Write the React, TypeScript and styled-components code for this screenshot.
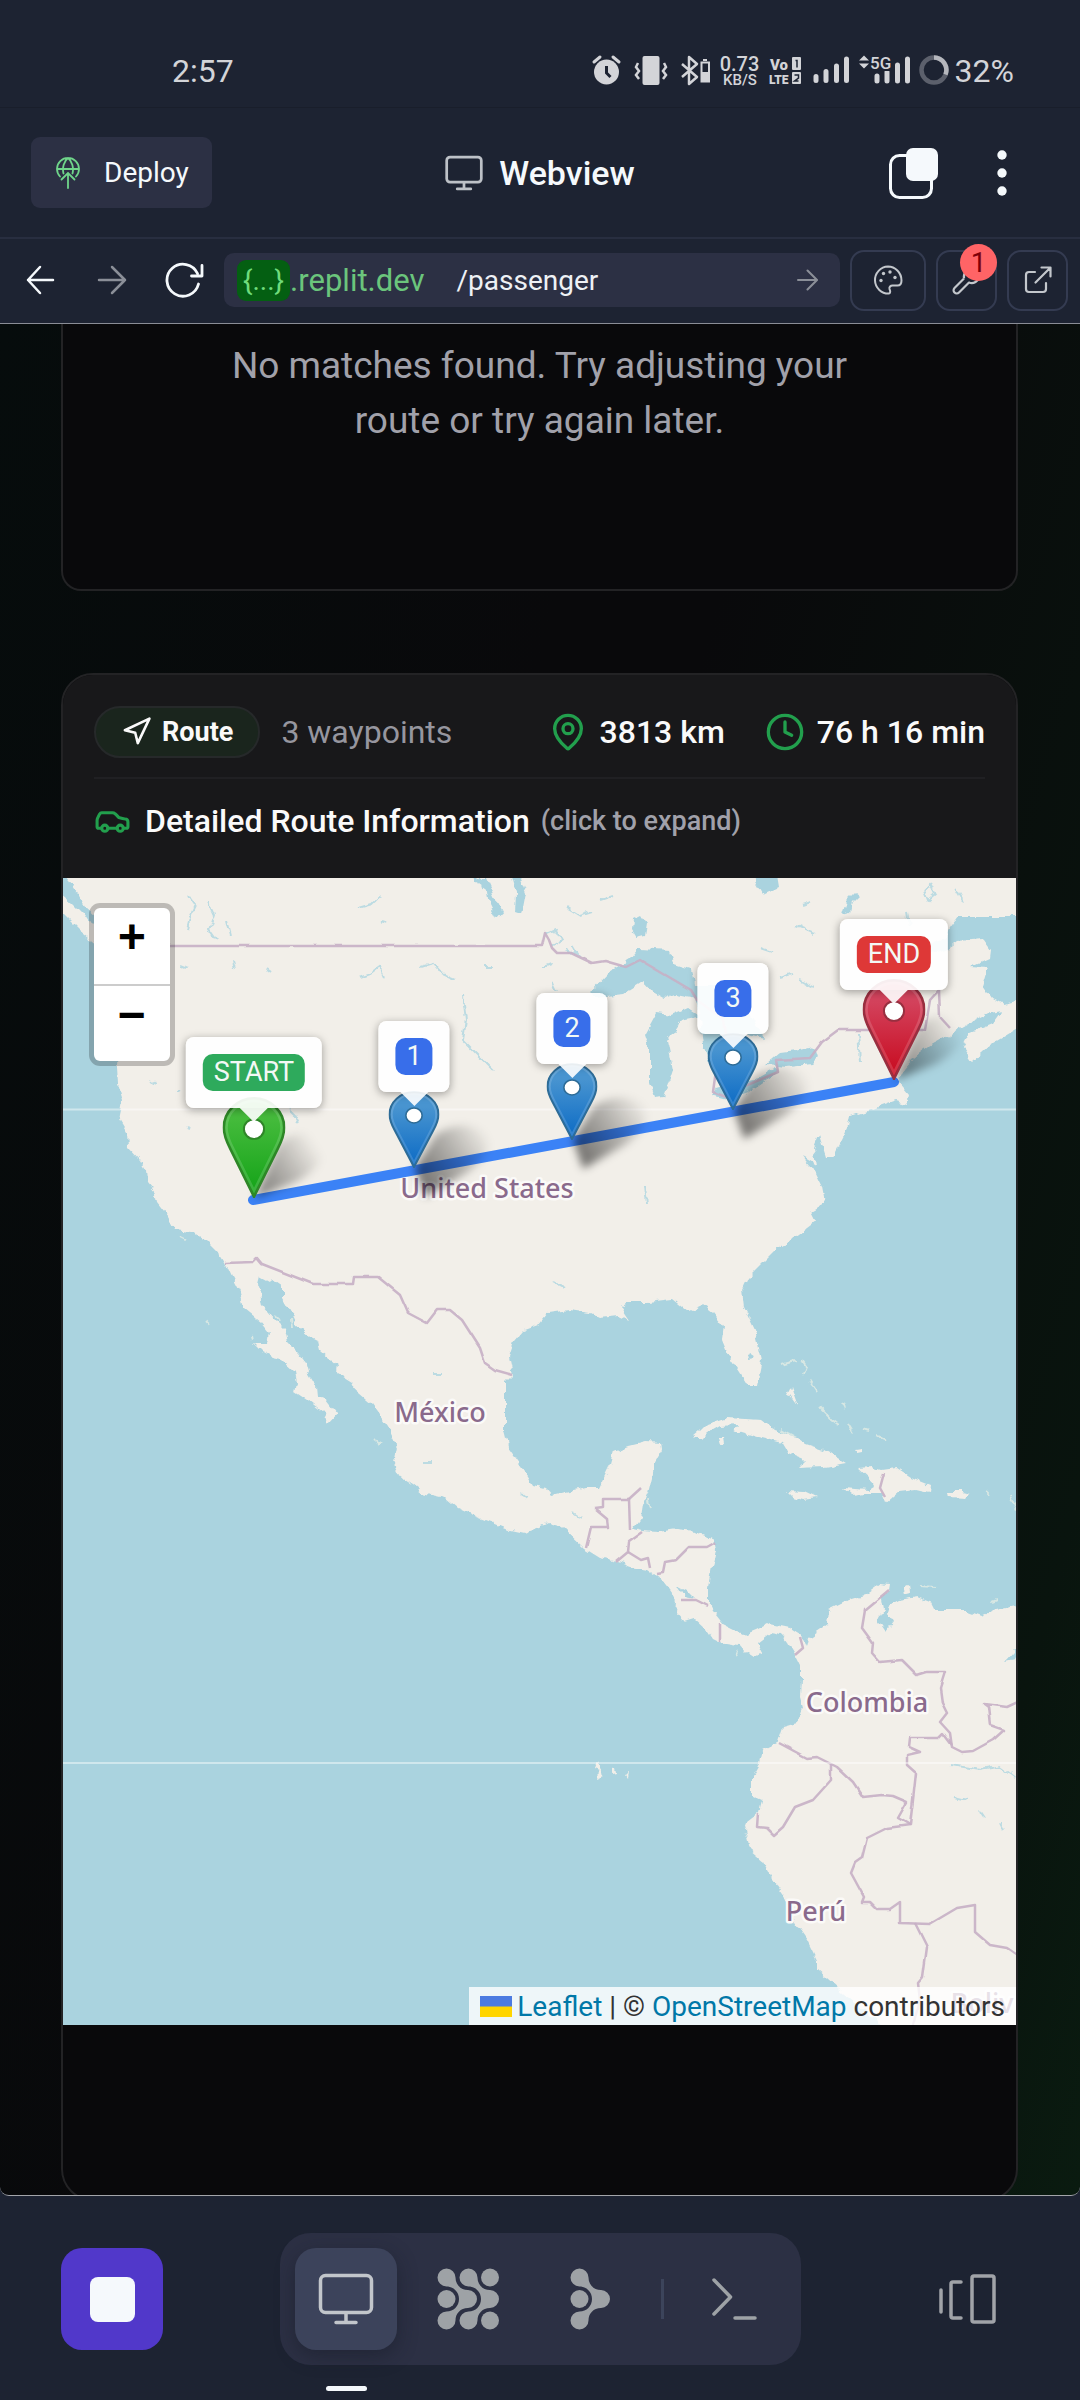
import React from "react";
import styled, { createGlobalStyle, css } from "styled-components";
import { Car, Clock, MapPin, Navigation } from "lucide-react";

const ui = `Roboto, "Liberation Sans", sans-serif`;
const ink = "#1d2332";
const raised = "#2c3044";

const GlobalStyle = createGlobalStyle`
  *, *::before, *::after { box-sizing: border-box; }
  body { margin: 0; background: ${ink}; font-family: ${ui}; }
  button { border: 0; padding: 0; background: none; color: inherit; font: inherit; cursor: pointer; }
  svg { display: block; flex: none; }
`;

const Screen = styled.div`
  display: flex;
  flex-direction: column;
  height: 100vh;
  background: ${ink};
  color: #f5f9fc;
`;

/* ---------- status bar ---------- */

const StatusBar = styled.div`
  display: flex;
  align-items: center;
  justify-content: space-between;
  height: 108px;
  padding: 34px 66px 0 172px;
  border-bottom: 1px solid #191e2b;
  color: #d3d4d8;
  font-size: 32px;
  line-height: 36px;
`;

const StatusIcons = styled.div`
  display: flex;
  align-items: center;
  gap: 6px;
`;

/* ---------- title bar ---------- */

const TitleBar = styled.header`
  display: grid;
  grid-template-columns: 1fr auto 1fr;
  align-items: center;
  height: 131px;
  padding: 0 31px;
  border-bottom: 2px solid #282e40;
`;

const DeployButton = styled.button`
  display: flex;
  align-items: center;
  justify-self: start;
  gap: 24px;
  height: 71px;
  padding: 0 23px 0 25px;
  border-radius: 9px;
  background: ${raised};
  font-size: 28px;
`;

const Title = styled.h1`
  display: flex;
  align-items: center;
  gap: 16px;
  margin: 0;
  font-size: 34px;
  font-weight: 500;

  svg { color: #bdc1c7; }
`;

const TitleActions = styled.div`
  display: flex;
  align-items: center;
  justify-self: end;
  gap: 58px;
  margin-right: 42px;
`;

/* ---------- browser toolbar ---------- */

const Toolbar = styled.div`
  display: flex;
  align-items: center;
  gap: 10px;
  height: 85px;
  padding: 0 12px 2px 20px;
  border-bottom: 1px solid #8a8d96;
`;

const NavButtons = styled.div`
  display: flex;
  align-items: center;
  gap: 32px;
  margin-right: 8px;
`;

const NavButton = styled.button<{ $dim?: boolean }>`
  color: ${(p) => (p.$dim ? "#8b8f98" : "#f5f9fc")};
`;

const AddressBar = styled.form`
  display: flex;
  flex: 1;
  align-items: center;
  min-width: 0;
  height: 54px;
  padding: 0 22px 0 13px;
  border-radius: 10px;
  background: ${raised};
  font-size: 28px;
  line-height: 41px;
`;

const HostChip = styled.span`
  padding: 0 6px;
  border-radius: 9px;
  background: #045f12;
  color: #6fdc7c;
`;

const Host = styled.span`
  color: #6bc57c;
  font-size: 31px;
`;

const PathInput = styled.input`
  flex: 1;
  min-width: 0;
  margin-left: 32px;
  padding: 0;
  border: 0;
  outline: 0;
  background: none;
  color: #eef1f5;
  font: inherit;
`;

const ToolButton = styled.button<{ $wide?: boolean }>`
  position: relative;
  display: grid;
  place-items: center;
  width: ${(p) => (p.$wide ? 76 : 61)}px;
  height: 61px;
  border: 2px solid #343b51;
  border-radius: 14px;
  color: #c3c7cc;
`;

const Badge = styled.span`
  position: absolute;
  top: -8px;
  right: -2px;
  width: 37px;
  height: 37px;
  border-radius: 50%;
  background: #ff6466;
  color: #7d0009;
  font-size: 28px;
  line-height: 37px;
`;

/* ---------- page inside the web view ---------- */

const Page = styled.main`
  display: flex;
  flex: 1;
  flex-direction: column;
  gap: 82px;
  min-height: 0;
  overflow: hidden;
  padding: 0 62px 0 61px;
  border-bottom: 1px solid #a3a5aa;
  border-radius: 0 0 9px 9px;
  background: linear-gradient(105deg, #060c0c 0%, #09090b 40%, #09090b 50%, #09140e 88%, #0a1b10 100%);
`;

const panel = css`
  border: 2px solid #232325;
  background: #09090b;
  flex: none;
`;

const EmptyCard = styled.section`
  ${panel}
  border-top: 0;
  border-radius: 0 0 20px 20px;
  padding: 14px 150px 141px;
`;

const EmptyText = styled.p`
  margin: 0;
  color: #a1a1aa;
  font-size: 37px;
  line-height: 55px;
  text-align: center;
`;

const RouteCard = styled.section`
  ${panel}
  overflow: hidden;
  padding-bottom: 174px;
  border-radius: 32px;
`;

const RouteHeader = styled.div`
  padding: 0 31px;
  background: #18181a;
`;

const SummaryRow = styled.div`
  display: flex;
  align-items: center;
  justify-content: space-between;
  height: 104px;
  padding-top: 11px;
  border-bottom: 2px solid #202023;
`;

const Cluster = styled.div<{ $gap: number }>`
  display: flex;
  align-items: center;
  gap: ${(p) => p.$gap}px;
`;

const RouteBadge = styled.span`
  display: flex;
  align-items: center;
  gap: 10px;
  height: 52px;
  padding: 0 25px;
  border: 2px solid #26292a;
  border-radius: 26px;
  background: #1a251d;
  color: #fafafa;
  font-size: 27px;
  font-weight: 700;
`;

const Muted = styled.span`
  color: #96969f;
  font-size: 32px;
`;

const Stat = styled.span`
  display: flex;
  align-items: center;
  gap: 12px;
  color: #fafafa;
  font-size: 32px;
  font-weight: 500;

  svg { color: #229f4d; }
`;

const DetailsToggle = styled.button`
  display: flex;
  align-items: center;
  width: 100%;
  height: 99px;
  padding-bottom: 16px;
  color: #fafafa;
  font-size: 32px;
  font-weight: 500;

  svg { margin-right: 14px; color: #229f4d; }
  small { margin-left: 11px; color: #a1a1aa; font-size: 27px; }
`;

/* ---------- map ---------- */

const MapFrame = styled.div`
  position: relative;
  aspect-ratio: 953 / 1147;
  overflow: hidden;
  background: #aad3df;
`;

const Chart = styled.svg`
  width: 100%;
  height: 100%;
`;

const PlaceName = styled.text`
  fill: #8a6a8c;
  stroke: #fbfaf8;
  stroke-width: 5px;
  stroke-linejoin: round;
  paint-order: stroke;
  font: 500 27px "Noto Sans", sans-serif;
`;

const ZoomControl = styled.div`
  position: absolute;
  top: 25px;
  left: 26px;
  display: flex;
  flex-direction: column;
  border: 5px solid rgba(0, 0, 0, 0.22);
  border-radius: 11px;
  background: #fff;
  background-clip: padding-box;
`;

const ZoomButton = styled.button`
  width: 76px;
  height: 76px;
  padding-bottom: 12px;
  color: #000;
  font: 700 48px/60px "Liberation Mono", monospace;

  & + & { border-top: 2px solid #ccc; height: 77px; }
`;

const Pin = styled.div`
  position: absolute;
  width: 0;
  height: 0;
`;

const PinArt = styled.svg`
  position: absolute;
  bottom: 0;
  transform: translateX(-50%);
`;

const PinShadow = styled.svg`
  position: absolute;
  left: -20px;
  top: -90px;
`;

const Tooltip = styled.div<{ $lift: number }>`
  position: absolute;
  bottom: ${(p) => p.$lift}px;
  transform: translateX(-50%);
  padding: 17px;
  border-radius: 8px;
  background: rgba(255, 255, 255, 0.92);
  box-shadow: 0 2px 8px rgba(0, 0, 0, 0.35);

  &::after {
    content: "";
    position: absolute;
    top: 100%;
    left: 50%;
    margin-left: -14px;
    border: 14px solid transparent;
    border-top-color: rgba(255, 255, 255, 0.9);
    border-bottom: 0;
  }
`;

const Tag = styled.span<{ $color: string }>`
  display: block;
  padding: 0 11px;
  border-radius: 10px;
  background: ${(p) => p.$color};
  color: #f3f8f5;
  font-size: 27px;
  line-height: 37px;
`;

const Attribution = styled.div`
  position: absolute;
  right: 0;
  bottom: 0;
  display: flex;
  align-items: center;
  gap: 5px;
  height: 38px;
  padding: 0 11px;
  background: rgba(255, 255, 255, 0.8);
  color: #333;
  font-size: 28px;
  white-space: nowrap;

  a { color: #0078a8; text-decoration: none; }
`;

const WEST = 63;
const NORTH = 878;
const WIDTH = 953;
const HEIGHT = 1147;

const mainland = `60,870 72,885 86,908 95,916 99,924 92,926 84,914 72,902 60,892 60,910 68,918 80,930 90,938
97,950 108,985 119,1020 117,1067 118,1083 123,1100 119,1120 127,1133 128,1147 140,1160 146,1170 147,1183
155,1193 157,1203 168,1217 175,1230 190,1232 207,1240 217,1250 225,1263 232,1278 240,1293 245,1310 260,1322
269,1333 267,1343 253,1343 262,1352 273,1358 282,1360 295,1372 297,1382 295,1392 307,1400 323,1413 328,1423
337,1413 327,1400 318,1397 317,1387 308,1372 305,1362 298,1353 288,1343 285,1330 275,1320 262,1305 260,1293
257,1285 259,1277 268,1282 273,1280 283,1287 283,1298 290,1310 298,1327 310,1338 318,1342 320,1350 328,1357
338,1365 337,1373 353,1383 358,1393 372,1405 388,1427 397,1447 395,1457 392,1462 398,1475 413,1485 423,1493
445,1498 457,1508 477,1517 493,1523 510,1530 524,1533 540,1527 548,1523 562,1527 584,1548 600,1558 617,1562
631,1567 648,1570 662,1580 670,1590 677,1600 676,1612 684,1621 694,1618 706,1629 712,1638 720,1642 738,1645
745,1653 753,1658 762,1653 757,1643 770,1633 782,1635 788,1643 795,1655 801,1667 801,1680 800,1697 803,1708
797,1723 783,1727 778,1742 763,1750 760,1763 752,1777 752,1795 763,1800 760,1812 747,1822 744,1830 749,1850
763,1862 773,1880 785,1897 795,1923 807,1940 817,1960 817,1970 837,1988 860,2007 888,2030 1020,2030 1020,1606
1010,1607 996,1610 982,1616 965,1610 934,1610 930,1602 917,1597 899,1600 889,1605 887,1612 893,1623 886,1632
878,1620 883,1610 881,1599 889,1590 890,1584 882,1583 865,1595 848,1600 843,1603 829,1610 827,1625 808,1638
806,1647 800,1634 789,1627 770,1623 756,1630 744,1635 724,1625 712,1610 708,1603 708,1587 712,1567 716,1550
714,1540 703,1535 696,1531 677,1529 658,1532 641,1531 633,1529 641,1518 643,1505 648,1493 652,1477 655,1463
663,1450 662,1443 645,1442 629,1446 614,1452 610,1467 600,1488 586,1488 552,1496 545,1488 533,1485 524,1470
510,1450 505,1430 505,1383 513,1375 509,1357 514,1342 524,1330 538,1325 548,1313 569,1310 590,1313 600,1318
618,1316 629,1321 621,1309 629,1302 648,1302 672,1299 688,1312 703,1305 713,1313 724,1327 722,1340 729,1357
739,1372 747,1385 757,1385 762,1360 755,1330 744,1307 742,1290 748,1277 775,1250 795,1237 815,1222 810,1212
825,1203 822,1187 815,1173 803,1157 817,1165 814,1147 819,1135 826,1157 833,1157 848,1127 850,1117 871,1110
896,1101 906,1104 908,1095 898,1083 905,1068 912,1060 929,1047 950,1035 964,1027 991,1012 1002,1010 992,1024
970,1033 963,1047 972,1061 990,1045 1020,1027 1020,870`;

const waters = [
  "590,993 609,973 630,960 640,948 669,950 674,965 691,970 697,998 676,994 664,999 652,992 643,982 623,995 595,998",
  "657,1013 672,1015 688,1008 700,1016 681,1020 667,1040 673,1070 664,1097 655,1098 650,1083 650,1050 645,1035",
  "693,985 715,985 745,1005 764,1038 748,1034 730,1045 722,1050 712,1070 703,1046 699,1010",
  "712,1095 728,1099 750,1091 778,1072 774,1069 755,1080 730,1083 716,1087",
  "766,1065 781,1052 797,1050 812,1046 819,1057 812,1064 788,1067",
  "750,870 764,895 779,888 776,870",
  "633,919 641,915 647,924 645,936 637,938 632,930",
  "470,870 477,884 488,892 490,905 497,919 503,912 495,896 488,880 482,880",
  "510,870 514,885 517,895 516,912 522,914 526,893 520,878",
  "1020,917 958,917 950,928 946,938 929,943 908,963 920,957 946,950 957,942 984,940 991,950 990,958 970,967 988,968 983,985 992,998 1004,1004 1020,1000",
  "677,1586 685,1590 694,1599 684,1597",
  "748,1355 752,1353 754,1359 749,1360",
  "1005,1662 1014,1652 1012,1649 1018,1652 1014,1660",
  "850,913 852,903 860,895 856,892 846,902 842,915",
];

const islands = [
  "693,1438 700,1432 707,1425 727,1418 745,1419 762,1420 775,1430 796,1437 806,1444 824,1450 846,1463 824,1467 797,1468 805,1460 788,1453 782,1443 770,1440 758,1437 734,1430 738,1425 720,1426 708,1433 703,1438",
  "718,1437 724,1437 725,1443 720,1444",
  "787,1491 803,1492 816,1498 803,1500 793,1497",
  "858,1468 872,1467 882,1470 896,1468 910,1477 930,1485 929,1493 916,1490 899,1492 886,1503 882,1493 865,1493 851,1495 843,1488 856,1489 868,1490 873,1487 868,1477",
  "948,1491 962,1491 970,1493 966,1498 949,1497",
  "791,1387 794,1396 798,1407 790,1396 787,1395",
  "988,924 1002,929 1020,936 1020,941 1003,937 990,930",
  "597,1761 600,1768 605,1776 598,1779 599,1771 594,1769",
  "905,1588 909,1586 910,1592 906,1593",
  "855,1450 862,1449 862,1452 857,1453",
  "611,1770 614,1769 615,1773 611,1774",
  "625,1774 628,1773 627,1777",
];

const borders = [
  "95,946 542,946 545,933 549,940 552,948 557,953 571,953 592,963 605,961 626,967 640,960 691,990 697,1000 724,1020 727,1040 716,1070 713,1092 726,1097 745,1086 778,1072 776,1060 810,1058 822,1042 838,1030 925,1030 930,1000 939,990 940,1017 950,1028",
  "225,1263 253,1262 257,1258 262,1264 313,1284 353,1284 354,1277 378,1277 400,1295 408,1313 427,1323 437,1310 450,1310 462,1320 480,1348 485,1363 495,1370 513,1375",
  "586,1548 591,1527 608,1527 607,1519 595,1509 603,1508 603,1499 629,1499 630,1530",
  "629,1499 641,1488",
  "616,1562 628,1552 629,1542 643,1532",
  "628,1552 641,1560 648,1558 650,1568",
  "657,1573 663,1572 665,1562 676,1560 689,1547 707,1547 716,1542",
  "681,1600 696,1600 708,1606",
  "720,1642 720,1624",
  "800,1637 803,1648 795,1655",
  "889,1590 877,1600 865,1610 862,1628 873,1643 872,1653 880,1662 902,1660 917,1675 927,1672 945,1672 940,1688 942,1703 947,1713 940,1722 950,1733 952,1747 962,1752 973,1751 993,1740 1004,1730 990,1725 988,1707 984,1704 1007,1707 1020,1701",
  "952,1745 943,1733 938,1738 910,1738 909,1747 920,1752 907,1755 907,1765 916,1773 913,1800 910,1825 898,1818 907,1802 893,1796 882,1795 863,1797 853,1782 837,1767 817,1757 807,1758 779,1743",
  "831,1763 831,1780 813,1800 795,1807 783,1827 774,1835 767,1828 757,1827 758,1813",
  "910,1825 887,1828 867,1838 862,1858 855,1863 851,1873 864,1897 862,1902 870,1902 877,1909 890,1909 900,1902 900,1923 930,1924 957,1908 975,1905 975,1932 990,1945 1007,1948 1020,1957",
  "915,1923 927,1947 923,1977 918,1983 920,2000 913,2025",
  "884,1473 880,1488 885,1497",
];

const streams = [
  "188,894 196,905 190,918 187,930", "208,902 214,915 209,930 216,940", "226,920 230,935",
  "358,978 372,973 380,967 384,976", "422,966 432,963 440,972 454,978", "463,996 466,1020 463,1040 475,1052 493,1070",
  "358,908 372,904 380,896", "545,935 556,930 562,940 552,946", "565,950 578,956 572,946",
  "542,968 552,964", "567,908 580,916 592,912", "600,900 612,896", "780,978 792,974", "800,980 815,988",
  "760,948 772,952", "797,925 815,933", "803,905 812,902", "858,1035 860,1060", "645,1185 647,1205",
  "181,965 188,968", "265,968 270,972", "234,961 236,968", "150,1080 156,1084", "176,1092 180,1090",
  "187,1127 191,1129", "289,1108 295,1114 300,1124", "382,920 388,922", "484,966 492,966",
  "924,890 930,884 935,894 928,900 924,890", "907,912 909,926", "955,888 963,902",
  "432,1374 443,1374", "423,1463 434,1463", "522,1494 527,1498", "573,1512 582,1518",
  "950,1765 980,1770 1000,1766 1016,1778", "955,1797 968,1800", "980,1812 984,1818", "1000,1822 1004,1830",
  "553,1282 564,1288", "552,983 556,992",
];

const shoals = [
  "781,1364 795,1360", "802,1360 806,1366 803,1374", "810,1381 817,1392", "820,1408 830,1418 838,1424",
  "842,1402 845,1408", "847,1422 853,1432", "862,1429 868,1431", "878,1437 886,1441", "781,1429 794,1436",
  "648,1500 650,1508", "984,1490 988,1494", "920,1585 935,1586", "992,1602 997,1600", "375,1440 380,1444",
  "205,1320 209,1324", "251,1335 252,1340", "276,1315 280,1322", "292,1318 293,1328", "1010,1495 1016,1510",
  "735,1651 738,1656", "180,1237 186,1240",
];

const places = [
  { name: "United States", x: 487, y: 1198 },
  { name: "México", x: 440, y: 1422 },
  { name: "Colombia", x: 867, y: 1712 },
  { name: "Perú", x: 816, y: 1921 },
  { name: "Boliv", x: 982, y: 2013 },
];

type Stop = { label: string; x: number; y: number; kind: "start" | "way" | "end" };

const stops: Stop[] = [
  { label: "START", x: 254, y: 1198, kind: "start" },
  { label: "1", x: 414, y: 1168, kind: "way" },
  { label: "2", x: 572, y: 1140, kind: "way" },
  { label: "3", x: 733, y: 1110, kind: "way" },
  { label: "END", x: 894, y: 1080, kind: "end" },
];

const kinds = {
  start: { tag: "#2eaa5c", top: "#45bb3c", bottom: "#18a51b", edge: "#2f8628", w: 63, h: 101 },
  way: { tag: "#386eea", top: "#4894d0", bottom: "#126fc6", edge: "#2e6c97", w: 51, h: 77 },
  end: { tag: "#de3837", top: "#d3435d", bottom: "#c90f24", edge: "#982f40", w: 63, h: 101 },
};

const percent = (part: number, whole: number) => `${(part / whole) * 100}%`;

function StopPin({ stop }: { stop: Stop }) {
  const k = kinds[stop.kind];
  const way = stop.kind === "way";
  const id = `pin-${stop.label}`;
  return (
    <Pin style={{ left: percent(stop.x - WEST, WIDTH), top: percent(stop.y - NORTH, HEIGHT) }}>
      <PinShadow width="140" height="140" viewBox="-20 -90 140 140" aria-hidden="true">
        <defs>
          <linearGradient id={`${id}-s`} gradientUnits="userSpaceOnUse" x1="5" y1="5" x2="72" y2="-38">
            <stop offset="0" stopColor="#000" stopOpacity=".5" />
            <stop offset=".5" stopColor="#000" stopOpacity=".26" />
            <stop offset="1" stopColor="#000" stopOpacity="0" />
          </linearGradient>
          <filter id={`${id}-b`} x="-30%" y="-30%" width="160%" height="160%">
            <feGaussianBlur stdDeviation="4" />
          </filter>
        </defs>
        <path
          d={way ? "M1 0 L11 29 L54 4 Q84 -18 70 -36 Q48 -50 22 -34Z" : "M1 0 L42 -16 Q78 -36 66 -56 Q46 -74 24 -54Z"}
          fill={`url(#${id}-s)`}
          filter={`url(#${id}-b)`}
        />
      </PinShadow>
      <PinArt width={k.w} height={k.h} viewBox="0 0 25 41" preserveAspectRatio="none" aria-hidden="true">
        <defs>
          <linearGradient id={id} x1="0" y1="0" x2="0" y2="1">
            <stop offset=".2" stopColor={k.top} />
            <stop offset=".9" stopColor={k.bottom} />
          </linearGradient>
        </defs>
        <path
          d="M12.5.5C5.9.5.5 5.9.5 12.5c0 3 1.2 5.8 2.6 8.6L12.5 40.5l9.4-19.400c1.400-2.800 2.600-5.600 2.600-8.600C24.500 5.900 19.100.5 12.500.5z"
          fill={`url(#${id})`}
          stroke={k.edge}
        />
        <path
          d="M12.5 1.600C6.500 1.600 1.600 6.500 1.600 12.500c0 2.800 1.100 5.400 2.500 8.100L12.500 38l8.400-17.400c1.400-2.700 2.500-5.300 2.500-8.100C23.400 6.500 18.500 1.600 12.500 1.600z"
          fill="none"
          stroke="#fff"
          strokeOpacity=".15"
        />
        <circle cx="12.5" cy="13" r="4" fill="#fff" stroke={k.edge} strokeWidth=".8" />
      </PinArt>
      <Tooltip $lift={way ? 76 : 90} role="tooltip">
        <Tag $color={k.tag}>{stop.label}</Tag>
      </Tooltip>
    </Pin>
  );
}

function RouteMap() {
  return (
    <MapFrame>
      <Chart viewBox={`${WEST} ${NORTH} ${WIDTH} ${HEIGHT}`} preserveAspectRatio="none" role="img" aria-label="Map of the route">
        <defs>
          <filter id="coast" filterUnits="userSpaceOnUse" x={WEST - 10} y={NORTH - 10} width={WIDTH + 20} height={HEIGHT + 20}>
            <feTurbulence type="fractalNoise" baseFrequency=".11" numOctaves="2" seed="4" />
            <feDisplacementMap in="SourceGraphic" scale="8" xChannelSelector="R" yChannelSelector="G" />
          </filter>
          <filter id="frontier" filterUnits="userSpaceOnUse" x={WEST - 10} y={NORTH - 10} width={WIDTH + 20} height={HEIGHT + 20}>
            <feTurbulence type="fractalNoise" baseFrequency=".06" numOctaves="1" seed="2" />
            <feDisplacementMap in="SourceGraphic" scale="3" xChannelSelector="R" yChannelSelector="G" />
          </filter>
        </defs>
        <rect x={WEST} y={NORTH} width={WIDTH} height={HEIGHT} fill="#aad3df" />
        <g filter="url(#coast)">
          <g fill="#f2efe9">
            <polygon points={mainland} />
            {islands.map((p) => <polygon key={p} points={p} />)}
          </g>
          <g fill="#aad3df">{waters.map((p) => <polygon key={p} points={p} />)}</g>
          <g fill="none" stroke="#d7e7e3" strokeWidth="2">{shoals.map((p) => <polyline key={p} points={p} />)}</g>
          <g fill="none" stroke="#bcdbe2" strokeWidth="2">{streams.map((p) => <polyline key={p} points={p} />)}</g>
        </g>
        <g fill="none" stroke="#c6b0c5" strokeWidth="2.5" strokeOpacity=".9" strokeLinejoin="round" filter="url(#frontier)">
          {borders.map((p) => <polyline key={p} points={p} />)}
        </g>
        <path d="M63 1109.5H1016M63 1763H1016" stroke="#fff" strokeOpacity=".45" strokeWidth="2" />
        {places.map((p) => (
          <PlaceName key={p.name} x={p.x} y={p.y} textAnchor="middle">{p.name}</PlaceName>
        ))}
        <path d="M253 1200L894 1082" stroke="#3b82f6" strokeWidth="10" strokeLinecap="round" />
      </Chart>
      {stops.map((stop) => <StopPin key={stop.label} stop={stop} />)}
      <ZoomControl>
        <ZoomButton type="button" aria-label="Zoom in">+</ZoomButton>
        <ZoomButton type="button" aria-label="Zoom out">−</ZoomButton>
      </ZoomControl>
      <Attribution>
        <svg width="32" height="21" viewBox="0 0 32 21" aria-hidden="true">
          <path d="M0 0h32v11H0z" fill="#4c7be1" />
          <path d="M0 10.5h32V21H0z" fill="#ffd500" />
        </svg>
        <span>
          <a href="#leaflet">Leaflet</a> | © <a href="#osm">OpenStreetMap</a> contributors
        </span>
      </Attribution>
    </MapFrame>
  );
}

/* ---------- bottom dock ---------- */

const Dock = styled.footer`
  display: grid;
  grid-template-columns: 1fr auto 1fr;
  align-items: start;
  height: 204px;
  padding: 37px 61px 0;
`;

const StopButton = styled.button`
  display: grid;
  place-items: center;
  width: 102px;
  height: 102px;
  margin-top: 15px;
  border-radius: 21px;
  background: #5138ca;
`;

const DockTabs = styled.nav`
  display: flex;
  align-items: center;
  gap: 20px;
  height: 132px;
  padding: 0 15px;
  border-radius: 31px;
  background: ${raised};
`;

const DockTab = styled.button<{ $active?: boolean }>`
  position: relative;
  display: grid;
  place-items: center;
  width: 102px;
  height: 102px;
  border-radius: 21px;
  color: #9ea2a6;

  ${(p) =>
    p.$active &&
    css`
      background: #3c435b;
      box-shadow: 0 6px 20px rgba(20, 24, 36, 0.45);
      color: #c2c6cb;

      &::after {
        content: "";
        position: absolute;
        top: 138px;
        left: 50%;
        width: 41px;
        height: 5px;
        margin-left: -20px;
        border-radius: 3px;
        background: #f5f9fc;
      }
    `}
`;

const DockRule = styled.span`
  width: 3px;
  height: 40px;
  background: #3c445b;
`;

const TabsButton = styled.button`
  justify-self: end;
  margin: 40px 22px 0 0;
  color: #a0a3a8;
`;

function Monitor({ size, weight }: { size: number; weight: number }) {
  return (
    <svg width={size} height={size} viewBox="0 0 56 56" fill="none" stroke="currentColor" strokeWidth={weight} strokeLinecap="round" aria-hidden="true">
      <rect x="2.5" y="4.5" width="51" height="37" rx="5" />
      <path d="M28 42v9M18 51.5h20" />
    </svg>
  );
}

function StatusGlyphs() {
  return (
    <svg width="358" height="36" viewBox="590 54 358 36" fill="currentColor" aria-hidden="true">
      <circle cx="605.5" cy="73" r="12.5" />
      <path d="M593 63l6-5M618 63l-6-5" stroke="currentColor" strokeWidth="3" strokeLinecap="round" />
      <path d="M605.5 67v7l4 4" fill="none" stroke={ink} strokeWidth="3" />
      <rect x="641.5" y="57" width="17" height="29" rx="2" />
      <path d="M637 64l-2 4 3 4-3 4 3 4M663 64l2 4-3 4 3 4-3 4" fill="none" stroke="currentColor" strokeWidth="2.5" />
      <path d="M681 65l15 13-8 7V58l8 7-15 13" fill="none" stroke="currentColor" strokeWidth="2.5" strokeLinejoin="round" />
      <path d="M700.5 63.5h7.5v19h-7.5zM702 61h4" fill="none" stroke="currentColor" strokeWidth="2" />
      <rect x="701" y="73" width="7" height="9" />
      <g fontFamily="Roboto, sans-serif" fontWeight="500">
        <text x="738.5" y="72" fontSize="20" textAnchor="middle">0.73</text>
        <text x="739" y="86" fontSize="15" textAnchor="middle">KB/S</text>
        <text x="769" y="71" fontSize="15" fontWeight="900">Vo</text>
        <text x="768" y="85" fontSize="12" fontWeight="900">LTE</text>
      </g>
      <rect x="791" y="58" width="9" height="13" rx="1" />
      <rect x="791" y="73" width="9" height="12" rx="1" />
      <path d="M794.5 61.5h1.5v7M793.5 76h4v3l-4 3h4" fill="none" stroke={ink} strokeWidth="1.5" />
      <path d="M815 77.500v4M825 72.500v9M835.500 67v14.500M845.500 60v21.500" stroke="currentColor" strokeWidth="5" strokeLinecap="round" />
      <path d="M876 77v5M886 73v9M896.5 66v16M906.5 60v22" stroke="currentColor" strokeWidth="5" strokeLinecap="round" />
      <rect x="868" y="55" width="22" height="17" fill={ink} />
      <text x="869" y="70" fontFamily="Roboto, sans-serif" fontWeight="500" fontSize="17">5G</text>
      <path d="M858 61.5l5-5 5 5zM858 64.5l5 5 5-5z" />
      <circle cx="933" cy="71" r="12.5" fill="none" stroke="#5c606c" strokeWidth="4.5" />
      <path d="M933 58.5a12.5 12.5 0 0 1 11.5 17" fill="none" stroke="#b5b7bd" strokeWidth="4.5" />
    </svg>
  );
}

export default function App() {
  return (
    <Screen>
      <GlobalStyle />
      <StatusBar>
        <span>2:57</span>
        <StatusIcons>
          <StatusGlyphs />
          <span>32%</span>
        </StatusIcons>
      </StatusBar>

      <TitleBar>
        <DeployButton type="button">
          <svg width="24" height="32" viewBox="0 0 24 32" fill="none" stroke="#6fd58a" strokeWidth="1.8" strokeLinecap="round" aria-hidden="true">
            <path d="M4 19.5A11 11 0 1 1 20 19.5M1 12h22M7.5 16.5C6 11 8 4 12 1c4 3 6 10 4.5 15.5" />
            <path d="M12 31V16M5.5 22.5L12 16l6.5 6.5" />
          </svg>
          Deploy
        </DeployButton>
        <Title>
          <Monitor size={38} weight={4} />
          Webview
        </Title>
        <TitleActions>
          <button type="button" aria-label="Open tabs">
            <svg width="52" height="52" viewBox="0 0 52 52" aria-hidden="true">
              <rect x="3.5" y="8.5" width="41" height="42" rx="9" fill="none" stroke="#f5f9fc" strokeWidth="3" />
              <rect x="19" y="1" width="32" height="33" rx="7" fill="#f5f9fc" />
            </svg>
          </button>
          <button type="button" aria-label="More">
            <svg width="10" height="48" viewBox="0 0 10 48" fill="#f5f9fc" aria-hidden="true">
              <circle cx="5" cy="6" r="4.7" />
              <circle cx="5" cy="24" r="4.7" />
              <circle cx="5" cy="42" r="4.7" />
            </svg>
          </button>
        </TitleActions>
      </TitleBar>

      <Toolbar>
        <NavButtons>
          <NavButton type="button" aria-label="Back">
            <svg width="40" height="36" viewBox="0 0 40 36" fill="none" stroke="currentColor" strokeWidth="2.5" strokeLinecap="round" strokeLinejoin="round">
              <path d="M33 18H8M20 5L8 18l12 13" />
            </svg>
          </NavButton>
          <NavButton type="button" aria-label="Forward" $dim>
            <svg width="40" height="36" viewBox="0 0 40 36" fill="none" stroke="currentColor" strokeWidth="2.5" strokeLinecap="round" strokeLinejoin="round">
              <path d="M7 18h26M20 5l13 13-13 13" />
            </svg>
          </NavButton>
          <NavButton type="button" aria-label="Reload">
            <svg width="42" height="36" viewBox="0 0 42 36" fill="none" stroke="currentColor" strokeWidth="2.8" strokeLinecap="round" strokeLinejoin="round">
              <path d="M34.5 22a16 16 0 1 1-1-10.5M38 3.5V14H27.5" />
            </svg>
          </NavButton>
        </NavButtons>
        <AddressBar onSubmit={(e) => e.preventDefault()}>
          <HostChip>{"{...}"}</HostChip>
          <Host>.replit.dev</Host>
          <PathInput aria-label="Path" defaultValue="/passenger" />
          <NavButton type="submit" aria-label="Go" $dim>
            <svg width="21" height="22" viewBox="0 0 21 22" fill="none" stroke="currentColor" strokeWidth="2" strokeLinecap="round">
              <path d="M1 11h18M10.5 1.5L20 11l-9.5 9.5" />
            </svg>
          </NavButton>
        </AddressBar>
        <ToolButton type="button" aria-label="Theme" $wide>
          <svg width="30" height="30" viewBox="0 0 30 30" fill="none" stroke="currentColor" strokeWidth="2">
            <path d="M15 1.500a13.500 13.500 0 1 0 1 27c2-.5 1-3 .5-4.500-.5-2 1-3.500 3-3.500h5c3 0 4-2.500 4-5C28.500 7.500 22 1.500 15 1.500z" />
            <g fill="currentColor" stroke="none">
              <circle cx="10.5" cy="8.5" r="1.7" />
              <circle cx="17" cy="7" r="1.7" />
              <circle cx="22" cy="12.5" r="1.7" />
              <circle cx="8" cy="15.5" r="1.7" />
            </g>
          </svg>
        </ToolButton>
        <ToolButton type="button" aria-label="Developer tools, 1 issue">
          <svg width="30" height="30" viewBox="0 0 30 30" fill="none" stroke="currentColor" strokeWidth="2.2" strokeLinejoin="round">
            <path d="M12 13.5L2.500 23a3 3 0 0 0 4.500 4.500L17 17.500c4 2 10-1 10-7M12 13.500c-1-5 3-10 8-10" />
          </svg>
          <Badge>1</Badge>
        </ToolButton>
        <ToolButton type="button" aria-label="Open in new tab">
          <svg width="28" height="28" viewBox="0 0 28 28" fill="none" stroke="currentColor" strokeWidth="2.2" strokeLinecap="round" strokeLinejoin="round">
            <path d="M11 6H5a3 3 0 0 0-3 3v14a3 3 0 0 0 3 3h14a3 3 0 0 0 3-3v-6M17.5 1.5H26.500V10.500M26 2L11.500 16.500" />
          </svg>
        </ToolButton>
      </Toolbar>

      <Page>
        <EmptyCard>
          <EmptyText>No matches found. Try adjusting your route or try again later.</EmptyText>
        </EmptyCard>
        <RouteCard>
          <RouteHeader>
            <SummaryRow>
              <Cluster $gap={21}>
                <RouteBadge>
                  <Navigation size={31} strokeWidth={2} />
                  Route
                </RouteBadge>
                <Muted>3 waypoints</Muted>
              </Cluster>
              <Cluster $gap={40}>
                <Stat><MapPin size={40} />3813 km</Stat>
                <Stat><Clock size={40} />76 h 16 min</Stat>
              </Cluster>
            </SummaryRow>
            <DetailsToggle type="button" aria-expanded="false">
              <Car size={37} />
              Detailed Route Information
              <small>(click to expand)</small>
            </DetailsToggle>
          </RouteHeader>
          <RouteMap />
        </RouteCard>
      </Page>

      <Dock>
        <StopButton type="button" aria-label="Stop">
          <svg width="45" height="45" viewBox="0 0 45 45"><rect width="45" height="45" rx="8" fill="#f5f9fc" /></svg>
        </StopButton>
        <DockTabs>
          <DockTab type="button" aria-label="Webview" $active>
            <Monitor size={56} weight={3.5} />
          </DockTab>
          <DockTab type="button" aria-label="Tools">
            <svg width="62" height="62" viewBox="0 0 62 62" fill="currentColor">
              <circle cx="9.5" cy="31" r="9" />
              <circle cx="53" cy="9.5" r="9" />
              <circle cx="53" cy="52.5" r="9" />
              <path d="M9.5.5a9 9 0 0 1 9 9c0 7 5 12.500 12.500 12.500a9 9 0 0 1 0 18c-7.500 0-12.500 5.500-12.500 12.500a9 9 0 1 1-9-9c7 0 12.500-5.500 12.500-12.500S16.500 18.500 9.500 18.500a9 9 0 0 1 0-18z" />
              <path d="M31.5.5a9 9 0 0 1 9 9c0 7 5 12.500 12.500 12.500a9 9 0 0 1 0 18c-7.500 0-12.500 5.500-12.500 12.500a9 9 0 1 1-9-9c7 0 12.500-5.500 12.500-12.500s-5.500-12.500-12.500-12.500a9 9 0 0 1 0-18z" />
            </svg>
          </DockTab>
          <DockTab type="button" aria-label="Agent">
            <svg width="40" height="62" viewBox="0 0 40 62" fill="currentColor">
              <circle cx="9.5" cy="31" r="9" />
              <path d="M9.5.5a9 9 0 0 1 9 9c0 7 5 12.500 12.500 12.500a9 9 0 0 1 0 18c-7.500 0-12.500 5.500-12.500 12.500a9 9 0 1 1-9-9c7 0 12.500-5.500 12.500-12.500S16.500 18.500 9.500 18.500a9 9 0 0 1 0-18z" />
            </svg>
          </DockTab>
          <DockRule />
          <DockTab type="button" aria-label="Shell">
            <svg width="46" height="44" viewBox="0 0 46 44" fill="none" stroke="currentColor" strokeWidth="3.5" strokeLinecap="round" strokeLinejoin="round">
              <path d="M2 3l16.5 17L2 37M23 41h20" />
            </svg>
          </DockTab>
        </DockTabs>
        <TabsButton type="button" aria-label="Switch tabs">
          <svg width="58" height="52" viewBox="0 0 58 52" fill="none" stroke="currentColor" strokeWidth="3.5" strokeLinecap="round" strokeLinejoin="round">
            <path d="M2 17v22M22 9h-8a2 2 0 0 0-2 2v32a2 2 0 0 0 2 2h8" />
            <rect x="33" y="3" width="22" height="46" rx="2" />
          </svg>
        </TabsButton>
      </Dock>
    </Screen>
  );
}
